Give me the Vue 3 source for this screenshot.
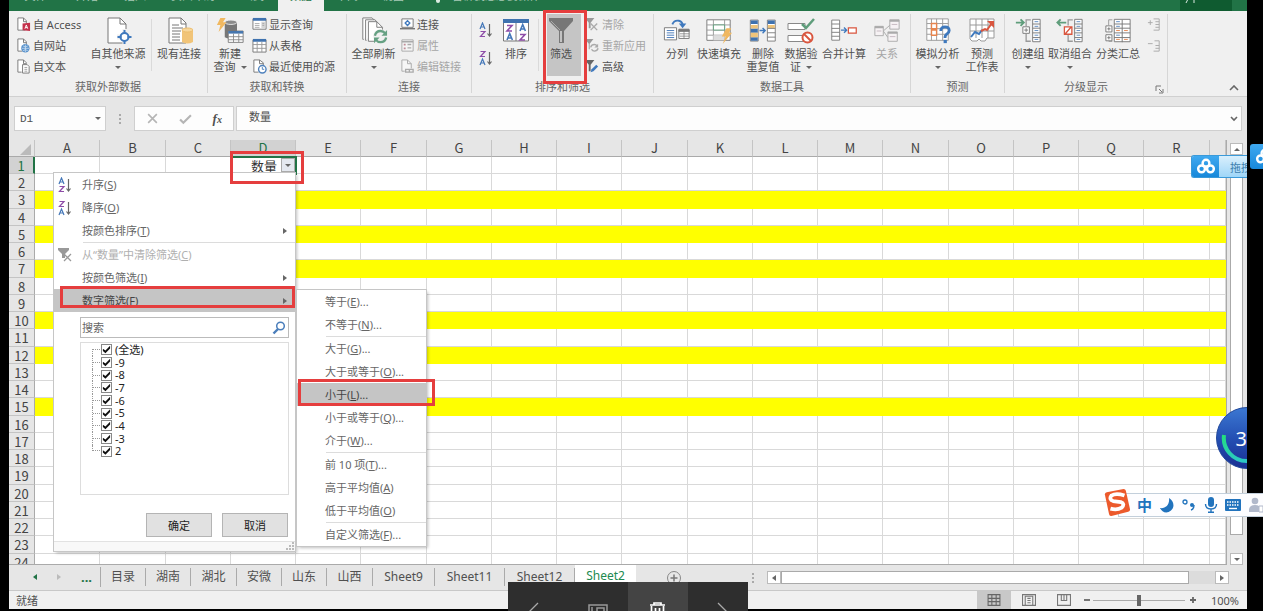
<script setup>
import { ref } from 'vue'

const ribbonTabs = [
  { text: '文件', cls: 'w53' },
  { text: '开始', cls: 'w50' },
  { text: '插入', cls: 'w46' },
  { text: '页面布局', cls: 'w70' },
  { text: '公式', cls: 'w50' },
  { text: '数据', cls: 'w46 active' },
  { text: '审阅', cls: 'w46' },
  { text: '视图', cls: 'w46' }
]

const big = (icon, lines, cls, extra = {}) => ({ kind: 'big', icon, lines, cls, ...extra })
const small = (items, cls = '') => ({ kind: 'small', items, cls })

const groups = [
  {
    name: '获取外部数据', cls: 'g199', parts: [
      small([
        { icon: 'access', text: '自 Access' },
        { icon: 'web', text: '自网站' },
        { icon: 'textfile', text: '自文本' }
      ], 'w76 pad7'),
      big('other', ['自其他来源'], 'w66', { arrow: true }),
      { kind: 'sep' },
      big('existing', ['现有连接'], 'w54')
    ]
  },
  {
    name: '获取和转换', cls: 'g139', parts: [
      big('newquery', ['新建', '查询'], 'w44', { inlineArrow: true }),
      small([
        { icon: 'showquery', text: '显示查询' },
        { icon: 'fromtable', text: '从表格' },
        { icon: 'recent', text: '最近使用的源' }
      ])
    ]
  },
  {
    name: '连接', cls: 'g125', parts: [
      big('refresh', ['全部刷新'], 'w53', { arrow: true }),
      small([
        { icon: 'connect', text: '连接' },
        { icon: 'props', text: '属性', off: true },
        { icon: 'links', text: '编辑链接', off: true }
      ])
    ]
  },
  {
    name: '排序和筛选', cls: 'g182', parts: [
      { kind: 'az' },
      big('sort', ['排序'], 'w44'),
      { kind: 'sep' },
      big('funnel', ['筛选'], 'w34', { on: true }),
      small([
        { icon: 'clear', text: '清除', off: true },
        { icon: 'reapply', text: '重新应用', off: true },
        { icon: 'advanced', text: '高级' }
      ])
    ]
  },
  {
    name: '数据工具', cls: 'g257', parts: [
      big('split', ['分列'], 'w46'),
      big('flash', ['快速填充'], 'w38'),
      big('dedupe', ['删除', '重复值'], 'w50'),
      big('validate', ['数据验', '证'], 'w26', { inlineArrow: true }),
      big('merge', ['合并计算'], 'w60'),
      big('relation', ['关系'], 'w26', { off: true })
    ]
  },
  {
    name: '预测', cls: 'g94', parts: [
      big('whatif', ['模拟分析'], 'w53', { arrow: true }),
      big('forecast', ['预测', '工作表'], 'w36')
    ]
  },
  {
    name: '分级显示', cls: 'g163', launcher: true, parts: [
      big('group', ['创建组'], 'w46', { arrow: true }),
      big('ungroup', ['取消组合'], 'w38', { arrow: true }),
      big('subtotal', ['分类汇总'], 'w58'),
      small([{ icon: 'expand', off: true }, { icon: 'collapse', off: true }], 'tight')
    ]
  }
]

const columns = 'ABCDEFGHIJKLMNOPQR'.split('')
const yellow = [3, 5, 7, 10, 12, 15]

const filterItems = [
  { icon: 'sortaz', text: '升序', key: 'S' },
  { icon: 'sortza', text: '降序', key: 'O' },
  { text: '按颜色排序', key: 'T', more: true },
  { line: true },
  { icon: 'clearbig', text: '从“数量”中清除筛选', key: 'C', off: true },
  { text: '按颜色筛选', key: 'I', more: true },
  { text: '数字筛选', key: 'F', more: true, on: true }
]
const numberItems = [
  { text: '等于', key: 'E', dots: true },
  { text: '不等于', key: 'N', dots: true },
  { line: true },
  { text: '大于', key: 'G', dots: true },
  { text: '大于或等于', key: 'O', dots: true },
  { text: '小于', key: 'L', dots: true, on: true },
  { text: '小于或等于', key: 'Q', dots: true },
  { text: '介于', key: 'W', dots: true },
  { line: true },
  { text: '前 10 项', key: 'T', dots: true },
  { text: '高于平均值', key: 'A' },
  { text: '低于平均值', key: 'O' },
  { line: true },
  { text: '自定义筛选', key: 'F', dots: true }
]
const values = ref(['(全选)', '-9', '-8', '-7', '-6', '-5', '-4', '-3', '2'].map(text => ({ text, checked: true })))

const sheets = [
  ['目录', 'w45'], ['湖南', 'w45'], ['湖北', 'w46'], ['安微', 'w45'], ['山东', 'w45'],
  ['山西', 'w46'], ['Sheet9', 'w62'], ['Sheet11', 'w70'], ['Sheet12', 'w70'], ['Sheet2', 'w61 current']
]
const cellName = ref('D1')
const formula = ref('数量')
const search = ref('')
const zoom = ref(50)
</script>

<template>
  <div class="desktop">
    <svg class="defs" aria-hidden="true">
      <symbol id="access" viewBox="0 0 16 16"><path d="M10 14H2V1h6l3 3v3" fill="#fff" stroke="#777" /><path d="M8 1v4h3" fill="none" stroke="#777" /><path d="M7 7l8-1v9l-8-1z" fill="#c4314b" /><path d="M9.500 12.500l1.500-4 1.500 4M10 11.300h2" stroke="#fff" fill="none" /></symbol>
      <symbol id="web" viewBox="0 0 16 16"><path d="M7 14H2V1h6l3 3v3" fill="#fff" stroke="#777" /><path d="M8 1v4h3" fill="none" stroke="#777" /><circle cx="10" cy="11" r="4.500" fill="#5b93cc" /><path d="M6 11h8M10 7v8M7.500 8.500q2.500 2 5 0M7.500 13.500q2.500-2 5 0" stroke="#dcebf8" stroke-width=".7" fill="none" /></symbol>
      <symbol id="textfile" viewBox="0 0 16 16"><path d="M6 14H2V1h6l3 3v1" fill="#fff" stroke="#777" /><path d="M8 1v4h3" fill="none" stroke="#777" /><path d="M7 6h5l2 2v7H7z" fill="#fff" stroke="#777" /><path d="M9 9h3M9 11h3M9 13h3" stroke="#888" stroke-width=".8" /></symbol>
      <symbol id="other" viewBox="0 0 28 28"><path d="M4 1h12l6 6v19H4z" fill="#fff" stroke="#777" /><path d="M16 1v6h6" fill="none" stroke="#777" /><path d="M21 12v16M13 20h16" stroke="#f0f0f0" stroke-width="5" /><circle cx="20.500" cy="20" r="4" fill="#fff" stroke="#3f79bd" stroke-width="2" /><path d="M20.500 13v4M20.500 23v4M13.500 20h4M23.500 20h4" stroke="#3f79bd" stroke-width="2" /></symbol>
      <symbol id="existing" viewBox="0 0 28 28"><path d="M4 1h12l5 5v20H4z" fill="#fff" stroke="#777" /><path d="M16 1v6h5M7 8h7M7 11h11M7 14h9M7 17h8M7 20h8M7 23h8" fill="none" stroke="#777" /><path d="M17 13v12q5.500 3 11 0V13z" fill="#f1c478" /><ellipse cx="22.500" cy="13" rx="5.500" ry="2" fill="#f7d79c" stroke="#eebd6b" /></symbol>
      <symbol id="newquery" viewBox="0 0 32 30"><path d="M10 5v17q7 4 14 0V5z" fill="#777" /><ellipse cx="17" cy="5" rx="7" ry="2.500" fill="#8b8b8b" stroke="#f0f0f0" /><path d="M5 0h6L8 5h4L3 16l2-8H1z" fill="#f0b860" /><path d="M14 15h17v13H14z" fill="#fff" stroke="#777" /><path d="M14 15h17v3H14z" fill="#4777af" /><path d="M14 21.500h17M14 25h17M20 18v10M26 18v10" stroke="#888" /></symbol>
      <symbol id="showquery" viewBox="0 0 16 16"><path d="M1 2h14v11H1z" fill="#fff" stroke="#777" /><path d="M1 1h14v3H1z" fill="#3f72af" /><path d="M10 5h4v7h-4z" fill="#d6d6d6" /><path d="M3 7h5M3 9h5M3 11h5M11 7h2M11 9h2" stroke="#aaa" /></symbol>
      <symbol id="fromtable" viewBox="0 0 16 16"><path d="M1 2h14v13H1z" fill="#fff" stroke="#777" /><path d="M1 1h14v3H1z" fill="#3f72af" /><path d="M1 7h14M1 11h14M5.500 4v11M10.500 4v11" stroke="#999" /></symbol>
      <symbol id="recent" viewBox="0 0 16 16"><path d="M7 14H2V1h6l4 3v3" fill="#fff" stroke="#777" /><path d="M8 1v4h4" fill="none" stroke="#777" /><circle cx="11" cy="11" r="4" fill="#fff" stroke="#4f82bd" stroke-width="1.500" /><path d="M11 8.500V11h2" fill="none" stroke="#4f82bd" /></symbol>
      <symbol id="refresh" viewBox="0 0 30 30"><path d="M4 24H3V1h10l2 2M7 25H6V3h10l2 2" fill="#fff" stroke="#777" /><path d="M9 5h9l6 6v15H9z" fill="#fff" stroke="#777" /><path d="M18 5v6h6" fill="none" stroke="#777" /><circle cx="22" cy="21" r="8" fill="#f0f0f0" /><path d="M16 20q1-5 6-5 3 0 5 2.500M28 22q-1 5-6 5-3 0-5-2.500" fill="none" stroke="#66a183" stroke-width="2.500" /><path d="M29 14v6h-6zM15 28v-6h6z" fill="#66a183" /></symbol>
      <symbol id="connect" viewBox="0 0 16 16"><path d="M2 2h12v9H2z" fill="#fff" stroke="#777" /><path d="M0 12.500h16" stroke="#777" stroke-width="1.500" /><path d="M8 3l3.500 3.500L8 10 4.500 6.500z" fill="#3f79bd" /><circle cx="8" cy="6.500" r="1.200" fill="#fff" /></symbol>
      <symbol id="props" viewBox="0 0 16 16"><path d="M2 2h12v12H2z" fill="#f5f5f5" stroke="#aaa" /><path d="M2 4h12M8 7h4M8 10.500h4" stroke="#aaa" stroke-width="1.500" /><path d="M4 6h2v2H4zM4 10h2v2H4z" fill="#c08d97" /></symbol>
      <symbol id="links" viewBox="0 0 16 16"><path d="M5 13H2V1h6l4 4v5" fill="#f6f6f6" stroke="#aaa" /><path d="M8 1v4h4" fill="none" stroke="#aaa" /><path d="M6 11h4v3H6zM10 11h4v3h-4z" fill="none" stroke="#aaa" stroke-width="1.400" /></symbol>
      <symbol id="sortaz" viewBox="0 0 14 16"><path d="M1 7l2.500-6L6 7M2 5h3" fill="none" stroke="#4477b8" stroke-width="1.200" /><path d="M1.500 9.500H6L1.500 14.500H6" fill="none" stroke="#8e4ea8" stroke-width="1.200" /><path d="M10.500 2v12M8.500 11.500l2 2.500 2-2.500" fill="none" stroke="#666" stroke-width="1.200" /></symbol>
      <symbol id="sortza" viewBox="0 0 14 16"><path d="M1.500 1.500H6L1.500 6.500H6" fill="none" stroke="#8e4ea8" stroke-width="1.200" /><path d="M1 15l2.500-6L6 15M2 13h3" fill="none" stroke="#4477b8" stroke-width="1.200" /><path d="M10.500 2v12M8.500 11.500l2 2.500 2-2.500" fill="none" stroke="#666" stroke-width="1.200" /></symbol>
      <symbol id="sort" viewBox="0 0 28 28"><path d="M1.500 3h25v21h-25zM14 3v21" fill="#fff" stroke="#777" /><path d="M1 2h26v4H1z" fill="#3f72af" /><path d="M5 8.500h5L5 14h5M18 17.500h5L18 23h5" fill="none" stroke="#8e4ea8" stroke-width="1.600" /><path d="M5 23l2.700-6.500L10.400 23M6 21h3.500M18 14l2.700-6.500L23.400 14M19 12h3.500" fill="none" stroke="#4477b8" stroke-width="1.600" /></symbol>
      <symbol id="funnel" viewBox="0 0 28 28"><path d="M2 1h24v3L17 14v12h-5V14L2 4z" fill="#777" /><path d="M14 14v11" stroke="#ddd" stroke-width="1.500" /><path d="M4 4l9 9" stroke="#aaa" /></symbol>
      <symbol id="clear" viewBox="0 0 16 16"><path d="M0 1h10L6 6v6H4V6z" fill="#999" /><path d="M6 7l7 7M13 7l-7 7" stroke="#aaa" stroke-width="1.500" /></symbol>
      <symbol id="reapply" viewBox="0 0 16 16"><path d="M0 1h9L5 6v6H4V6z" fill="#999" /><path d="M6 10q1-3 4-3 2 0 3 2M14 11q-1 3-4 3-2 0-3-2" fill="none" stroke="#aaa" stroke-width="1.500" /><path d="M14 6v4h-4z" fill="#aaa" /></symbol>
      <symbol id="advanced" viewBox="0 0 16 16"><path d="M0 1h10L6 6v7H4V6z" fill="#666" /><path d="M6 14l1-3 5-5 2 2-5 5z" fill="#3f79bd" /></symbol>
      <symbol id="clearbig" viewBox="0 0 16 16"><path d="M1 1h11v2L8 7v4H5V7L1 3z" fill="#999" /><path d="M7 7l7 7M14 7l-7 7" stroke="#999" stroke-width="1.300" /></symbol>
      <symbol id="split" viewBox="0 0 30 28"><path d="M1.500 10.500h13v13h-13z" fill="#fff" stroke="#777" /><path d="M4 13.500h8M4 16h8M4 18.500h8M4 21h8" stroke="#4477b8" /><path d="M17 13h11v9H17z" fill="#fff" stroke="#777" /><path d="M17 12h11v2.500H17zM22.500 14v8M18 17h10M18 19.500h10" fill="#777" stroke="#777" stroke-width=".8" /><path d="M10 7q2-5 7-4 4 1 4 5" fill="none" stroke="#3f79bd" stroke-width="2" /><path d="M17 6h8l-4 5z" fill="#3f79bd" /></symbol>
      <symbol id="flash" viewBox="0 0 30 28"><path d="M2 2h25v22H2z" fill="#fff" stroke="#777" /><path d="M2 7.500h25M2 13h25M2 18.500h25M9 2v22M21 2v22" stroke="#999" /><path d="M9 7.500h12V13H9z" fill="#fff" stroke="#5f9d7b" /><path d="M9 18.500h12V24H9z" fill="#ddd" /><path d="M23 11h5l-2 5h3L19 28l3-8h-4z" fill="#f0b860" /></symbol>
      <symbol id="dedupe" viewBox="0 0 32 28"><path d="M1.500 1.500h9v24h-9zM21 1.500h9v24h-9z" fill="#fff" stroke="#777" /><path d="M2 2h8v4H2zM2 11h8v5H2zM2 21h8v4H2zM21.500 2h8v4h-8z" fill="#3f72af" /><path d="M2 7h8v4H2zM2 16h8v5H2zM21.500 7h8v4h-8z" fill="#efc47a" /><path d="M21 11h9M21 16h9M21 21h9" stroke="#777" /><path d="M12 13.500h6M15.500 10.500l3 3-3 3" fill="none" stroke="#3f79bd" stroke-width="1.600" /></symbol>
      <symbol id="validate" viewBox="0 0 28 28"><path d="M1 6.500h17v6H1zM1 18.500h16v6H1z" fill="#fff" stroke="#888" /><path d="M15 7l4 4 8-9" fill="none" stroke="#5f9d7b" stroke-width="2.500" /><circle cx="20.500" cy="20.500" r="5" fill="#fff" stroke="#d9563f" stroke-width="2" /><path d="M17 17l7 7" stroke="#d9563f" stroke-width="2" /></symbol>
      <symbol id="merge" viewBox="0 0 32 28"><path d="M2 1.500h9v23H2zM2 6h9M2 11h9M2 15.500h9M2 20h9" fill="#fff" stroke="#777" /><path d="M12.500 13h6M16 10l3 3-3 3" fill="none" stroke="#3f79bd" stroke-width="1.600" /><path d="M21 10.500h9v6h-9z" fill="#fff" stroke="#d9563f" stroke-width="1.400" /></symbol>
      <symbol id="relation" viewBox="0 0 30 28"><path d="M11 14l8-7M11 14l5 7" stroke="#aaa" fill="none" /><path d="M2 9h9v10H2zM18 2h10v10H18zM16 15h10v10H16z" fill="#f6f2f4" stroke="#aaa" /><path d="M2 10h9M18 3h10M16 16h10" stroke="#aaa" stroke-width="2" /><path d="M4 14h5M20 7h6M18 20h6" stroke="#c5b8c0" /></symbol>
      <symbol id="whatif" viewBox="0 0 30 30"><path d="M3 2h23v23H3zM3 7h23M3 12.500h23M3 18.500h23M8 2v23M13.500 2v23M20 2v23" fill="#fff" stroke="#999" /><path d="M8 7h5.500v5.500H8zM8 14h5.500v5.500H8z" fill="#fff" stroke="#e6844e" stroke-width="1.500" /><path d="M18 15q0-4.500 4.500-4.500T27 14.500q0 2-2.300 3.500T22.500 22.500" fill="none" stroke="#3f79bd" stroke-width="3" /><path d="M21 24.500h3.500V28H21z" fill="#3f79bd" /></symbol>
      <symbol id="forecast" viewBox="0 0 28 28"><path d="M2 2h24v19h-7l-2 3h-4l-2-2-2 2H4l-2-2zM2 8h24M2 14h24M8 2v19M14 2v19M20 2v19" fill="#fff" stroke="#999" /><path d="M3 20l4-5 4 2 3-4" fill="none" stroke="#3f79bd" stroke-width="2" /><path d="M13 14l4-2 2 1 5-7" fill="none" stroke="#d9563f" stroke-width="2" /><path d="M19 4h7v7z" fill="#d9563f" /></symbol>
      <symbol id="group" viewBox="0 0 30 28"><path d="M20 1.500h8v24h-8zM20 6.500h8M20 11h8M20 16h8M20 21h8" fill="#fff" stroke="#777" /><path d="M22 4h4M22 9h4M22 13.500h4M22 18.500h4M22 23h4" stroke="#5a89c0" /><path d="M18 2h-5v7M13 17v8h5" fill="none" stroke="#999" stroke-width="1.400" /><path d="M9.500 9.500h7v7h-7zM11 13h4M13 11v4" fill="#fff" stroke="#777" /><path d="M2 5h8M7 1.500L10.500 5 7 8.500" fill="none" stroke="#5f9d7b" stroke-width="2" /></symbol>
      <symbol id="ungroup" viewBox="0 0 30 28"><path d="M20 1.500h8v24h-8zM20 6.500h8M20 11h8M20 16h8M20 21h8" fill="#fff" stroke="#777" /><path d="M22 4h4M22 9h4M22 13.500h4M22 18.500h4M22 23h4" stroke="#5a89c0" /><path d="M18 2h-5v6M13 18v7h5" fill="none" stroke="#999" stroke-width="1.400" /><path d="M9 9.500h8v8H9zM10 17l6-7" fill="#fff" stroke="#d9563f" stroke-width="1.400" /><path d="M2 5h9M5 1.500L1.500 5 5 8.500" fill="none" stroke="#5f9d7b" stroke-width="2" /></symbol>
      <symbol id="subtotal" viewBox="0 0 30 28"><path d="M11 1.500h17v24H11zM11 6.500h17M11 11h17M11 16h17M11 21h17M19.500 2v24" fill="#fff" stroke="#777" /><path d="M13 4h4M13 9h4M13 18.500h4" stroke="#5a89c0" /><path d="M13 13.500h4M21.500 13.500h4M21.500 23h4M13 23h4" stroke="#e6844e" /><path d="M9 2H5v6M5 25h4" fill="none" stroke="#999" /><path d="M2 8.500h6.500V15H2zM2 18h6.500v6.500H2zM3.500 11.700h3.500M5.200 10v3.500M3.500 21.200h3.500M5.200 19.500V23" fill="#fff" stroke="#777" /></symbol>
      <symbol id="expand" viewBox="0 0 16 16"><path d="M1 6h5M3.500 3.500v5M7 2h6v12H7M9 5h4M9 8h4M9 11h4" fill="none" stroke="#aaa" /></symbol>
      <symbol id="collapse" viewBox="0 0 16 16"><path d="M1 6h5M8 3h5v11H7M9 8h4M9 11h4" fill="none" stroke="#aaa" /></symbol>
      <symbol id="cloud" viewBox="0 0 20 18"><g fill="none" stroke="#fff" stroke-width="2.600"><circle cx="10" cy="5.500" r="3.600" /><circle cx="5.300" cy="11.500" r="3.600" /><circle cx="14.700" cy="11.500" r="3.600" /></g></symbol>
    </svg>

    <main class="window">
      <nav class="ribbon-tabs">
        <a v-for="t in ribbonTabs" :key="t.text" href="#" :class="t.cls">{{ t.text }}</a>
        <span class="bulb"></span>
        <a href="#" class="tell">告诉我您想要做什么...</a>
        <span class="share"><svg viewBox="0 0 16 6"><path d="M1 6l3-6M5 2h8M9 0v6" fill="none" stroke="#dcebe2" /></svg></span>
      </nav>

      <section class="ribbon">
        <div v-for="g in groups" :key="g.name" class="group" :class="g.cls">
          <div class="group-body">
            <template v-for="(p, i) in g.parts" :key="i">
              <button v-if="p.kind === 'big'" class="big" :class="[p.cls, { on: p.on, off: p.off }]">
                <svg class="icon-big"><use :href="'#' + p.icon" /></svg>
                <span v-for="(l, n) in p.lines" :key="l" class="line">{{ l }}<i v-if="p.inlineArrow && n === 1" class="tri"></i></span>
                <span v-if="p.arrow" class="line"><i class="tri alone"></i></span>
              </button>
              <span v-else-if="p.kind === 'sep'" class="vsep"></span>
              <div v-else-if="p.kind === 'az'" class="az">
                <button aria-label="升序"><svg><use href="#sortaz" /></svg></button>
                <button aria-label="降序"><svg><use href="#sortza" /></svg></button>
              </div>
              <div v-else class="smalls" :class="p.cls">
                <button v-for="s in p.items" :key="s.icon" class="small" :class="{ off: s.off }">
                  <svg class="icon-small"><use :href="'#' + s.icon" /></svg><span>{{ s.text }}</span>
                </button>
              </div>
            </template>
          </div>
          <div class="group-name">{{ g.name }}
            <svg v-if="g.launcher" class="launcher" viewBox="0 0 9 9"><path d="M1 6V1h5M4 4l3 3M8 4v4H4" fill="none" stroke="#777" /></svg>
          </div>
        </div>
        <button class="fold" aria-label="折叠功能区"><svg viewBox="0 0 10 6"><path d="M1 5l4-4 4 4" fill="none" stroke="#666" stroke-width="1.600" /></svg></button>
      </section>

      <section class="formula-row">
        <label class="name-box"><input v-model="cellName" aria-label="名称框"><i class="tri"></i></label>
        <span class="grip"></span>
        <div class="fx">
          <button aria-label="取消输入"><svg viewBox="0 0 12 12"><path d="M2 2l8 8M10 2l-8 8" stroke="#b5b5b5" stroke-width="1.500" /></svg></button>
          <button aria-label="输入"><svg viewBox="0 0 12 12"><path d="M1 7l3 3 7-7" fill="none" stroke="#b5b5b5" stroke-width="2" /></svg></button>
          <button class="fn">f<small>x</small></button>
        </div>
        <label class="formula"><input v-model="formula" aria-label="编辑栏"><svg viewBox="0 0 8 6"><path d="M1 1l3 3 3-3" fill="none" stroke="#666" stroke-width="1.600" /></svg></label>
      </section>

      <section class="sheet">
        <div class="grid">
          <table>
            <colgroup><col class="c-head"><col v-for="(c, i) in columns" :key="c" :class="i % 4 === 1 ? 'c66' : 'c65'"><col></colgroup>
            <thead>
              <tr><th class="corner"><i></i></th><th v-for="c in columns" :key="c" :class="{ sel: c === 'D' }">{{ c }}</th><th></th></tr>
            </thead>
            <tbody>
              <tr v-for="r in 24" :key="r" :class="{ yellow: yellow.includes(r), tall: r % 4 === 3 }">
                <th :class="{ sel: r === 1 }">{{ r }}</th>
                <td v-for="c in columns" :key="c" :class="{ active: r === 1 && c === 'D' }">
                  <div v-if="r === 1 && c === 'D'" class="field">数量<button aria-label="筛选"><i class="tri"></i></button></div>
                </td>
                <td></td>
              </tr>
            </tbody>
          </table>
        </div>
        <div class="vscroll">
          <button aria-label="向上"><i class="tri up"></i></button>
          <div class="vthumb"></div>
          <button aria-label="向下"><i class="tri"></i></button>
        </div>
      </section>

      <section class="tabs-row">
        <div class="tab-nav"><i class="tri left green"></i><i class="tri right pale"></i><b>...</b></div>
        <button v-for="s in sheets" :key="s[0]" class="tab" :class="s[1]">{{ s[0] }}</button>
        <button class="add" aria-label="新工作表"><svg viewBox="0 0 16 16"><circle cx="8" cy="8" r="6.500" fill="none" stroke="#888" /><path d="M8 4.500v7M4.500 8h7" stroke="#777" stroke-width="1.500" /></svg></button>
        <span class="grip end"></span>
        <div class="hscroll">
          <button aria-label="向左"><i class="tri left"></i></button>
          <div class="hthumb"></div><div class="htrack"></div>
          <button aria-label="向右"><i class="tri right"></i></button>
        </div>
      </section>

      <footer class="status">
        <span class="ready">就绪</span>
        <button class="view on" aria-label="普通"><svg viewBox="0 0 13 13"><path d="M1 1.500h11v10H1zM1 5h11M1 8h11M4.500 1.500v10M8.500 1.500v10" fill="none" stroke="#666" /></svg></button>
        <button class="view" aria-label="页面布局"><svg viewBox="0 0 13 13"><path d="M.5 1.500h12v10H.5zM3 3h7v8.500H3zM5 5h3M5 7h3M5 9h3" fill="none" stroke="#777" /></svg></button>
        <button class="view" aria-label="分页预览"><svg viewBox="0 0 13 13"><path d="M.5 1.500h12v10H.5zM4 1.500V7h5V1.500M6.500 1.500V7" fill="none" stroke="#777" /></svg></button>
        <button class="step" aria-label="缩小"><svg viewBox="0 0 8 8"><path d="M1 4h6" stroke="#666" stroke-width="1.800" /></svg></button>
        <input v-model="zoom" type="range" aria-label="缩放">
        <button class="step" aria-label="放大"><svg viewBox="0 0 8 8"><path d="M1 4h6M4 1v6" stroke="#666" stroke-width="1.800" /></svg></button>
        <span class="percent">100%</span>
      </footer>
    </main>

    <aside class="menu filter-menu">
      <template v-for="(m, i) in filterItems" :key="i">
        <hr v-if="m.line">
        <button v-else class="item" :class="{ on: m.on, off: m.off }">
          <span class="item-icon"><svg v-if="m.icon"><use :href="'#' + m.icon" /></svg></span>
          <span class="item-text">{{ m.text }}(<u>{{ m.key }}</u>)</span>
          <i v-if="m.more" class="tri right"></i>
        </button>
      </template>
      <div class="menu-form">
        <label class="search"><input v-model="search" placeholder="搜索" aria-label="搜索"><svg viewBox="0 0 14 14"><circle cx="8.500" cy="5" r="3.800" fill="none" stroke="#4a7ebb" stroke-width="1.500" /><path d="M6 8l-4.500 4.500" stroke="#4a7ebb" stroke-width="2.400" /></svg></label>
        <div class="tree">
          <label v-for="v in values" :key="v.text"><span class="twig"></span><input v-model="v.checked" type="checkbox"><span>{{ v.text }}</span></label>
        </div>
        <div class="actions"><button>确定</button><button>取消</button></div>
      </div>
      <div class="resize"><svg viewBox="0 0 8 8"><path d="M6 0h2v2H6zM3 3h2v2H3zM6 3h2v2H6zM0 6h2v2H0zM3 6h2v2H3zM6 6h2v2H6z" fill="#bbb" /></svg></div>
    </aside>

    <aside class="menu number-menu">
      <template v-for="(m, i) in numberItems" :key="i">
        <hr v-if="m.line">
        <button v-else class="item" :class="{ on: m.on }"><span class="item-text">{{ m.text }}(<u>{{ m.key }}</u>)<template v-if="m.dots">...</template></span></button>
      </template>
    </aside>

    <span class="mark mark-filter"></span>
    <span class="mark mark-cell"></span>
    <span class="mark mark-number"></span>
    <span class="mark mark-less"></span>

    <div class="drag"><span class="drag-icon"><svg><use href="#cloud" /></svg></span><span class="drag-text">拖拽上传</span></div>
    <div class="drag-side"><svg><use href="#cloud" /></svg></div>

    <div class="ball"><svg viewBox="0 0 31 62"><defs><linearGradient id="ballfill" x2="0" y2="1"><stop stop-color="#3c78d2" /><stop offset=".5" stop-color="#2450b4" /><stop offset="1" stop-color="#1a2f92" /></linearGradient><linearGradient id="arc" x2="0" y2="1"><stop stop-color="#22e07a" /><stop offset="1" stop-color="#2cc8c4" /></linearGradient></defs><circle cx="31" cy="31" r="30.500" fill="url(#ballfill)" stroke="#234a9c" /><path d="M8 28A23 23 0 0 0 31 54" fill="none" stroke="url(#arc)" stroke-width="4" /></svg><b>3</b></div>

    <div class="ime">
      <svg class="ime-logo" viewBox="0 0 30 30"><path d="M2 6q0-2 2-2.500L22 0q2 0 2.500 2L29 22q0 2-2 2.500L9 29q-2 0-2.500-2z" fill="#ec5a2c" /><path d="M23 7q-9-3-14 0-3 4 2 6l8 1q5 2 1 6-5 3-12 1" fill="none" stroke="#fff" stroke-width="4" /></svg>
      <b>中</b>
      <svg viewBox="0 0 16 16"><path d="M10 1C15 4 16 10 12 13.500S3 15.500 1 11C6 12 11 8 10 1z" fill="#2173bd" /></svg>
      <svg viewBox="0 0 16 16"><circle cx="4" cy="5" r="2" fill="none" stroke="#2173bd" stroke-width="1.300" /><circle cx="11" cy="8" r="2" fill="#2173bd" /><path d="M13 8q0 4-3 5" fill="none" stroke="#2173bd" stroke-width="1.500" /></svg>
      <svg viewBox="0 0 16 16"><rect x="5" y="0" width="6" height="10" rx="3" fill="#2173bd" /><path d="M2.500 7q0 5 5.500 5t5.500-5M8 12v3M5 15.300h6" fill="none" stroke="#2173bd" stroke-width="1.400" /></svg>
      <svg viewBox="0 0 16 16"><rect x="0" y="2" width="16" height="12" rx="1" fill="#2173bd" /><path d="M2 5h12M2 8h12" stroke="#fff" stroke-width="1.500" stroke-dasharray="1.500 1" /><path d="M4 11.500h8" stroke="#fff" stroke-width="1.400" /></svg>
      <svg viewBox="0 0 16 16"><circle cx="8" cy="4" r="3.300" fill="#b1b9cb" /><path d="M2 15v-3q1-4 6-4t6 4v3z" fill="#b1b9cb" /><path d="M12 9h4v6h-4z" fill="#fff" stroke="#b1b9cb" /></svg>
    </div>

    <div class="viewer">
      <button aria-label="上一张"><svg viewBox="0 0 60 29"><path d="M30 21l-9 9" fill="none" stroke="#aaa" stroke-width="1.300" /></svg></button>
      <button aria-label="适合窗口"><svg viewBox="0 0 60 29"><path d="M21 30v-7h18v7M24 30v-5M29 30v-4h7v4" fill="none" stroke="#999" stroke-width="1.500" /></svg></button>
      <button class="hot" aria-label="删除"><svg viewBox="0 0 60 29"><path d="M22 23h15M26 23v-2h7v2M23.500 24v6M35.500 24v6M27.500 26v4M31.500 26v4" fill="none" stroke="#fff" stroke-width="1.700" /></svg></button>
      <button aria-label="下一张"><svg viewBox="0 0 60 29"><path d="M30 21l9 9" fill="none" stroke="#aaa" stroke-width="1.300" /></svg></button>
    </div>
  </div>
</template>

<style>
body { background: #000; overflow: hidden; }
</style>

<style scoped>
.desktop, .desktop * { box-sizing: border-box; }
.desktop {
  position: relative; height: 100vh; overflow: hidden; background: #000; padding: 0 16px 2px 9px;
  font: 11px/13px "Noto Sans", "Noto Sans CJK SC", sans-serif; color: #505050;
}
.defs { position: absolute; width: 0; height: 0; }
button { font: inherit; color: inherit; background: none; border: 0; padding: 0; }
input { font: inherit; color: inherit; margin: 0; border: 0; padding: 0; background: none; min-width: 0; outline: 0; }
a { color: inherit; text-decoration: none; }
svg { display: block; flex: none; }

.w26 { width: 26px; } .w34 { width: 34px; } .w36 { width: 36px; } .w38 { width: 38px; }
.w44 { width: 44px; } .w45 { width: 45px; } .w46 { width: 46px; } .w50 { width: 50px; }
.w53 { width: 53px; } .w54 { width: 54px; } .w58 { width: 58px; } .w60 { width: 60px; }
.w61 { width: 61px; } .w62 { width: 62px; } .w66 { width: 66px; } .w70 { width: 70px; } .w76 { width: 76px; }

.tri { display: inline-block; flex: none; width: 0; height: 0; border: 3px solid transparent; border-top-color: #666; border-bottom: 0; }
.tri.up { border: 3px solid transparent; border-bottom-color: #666; border-top: 0; }
.tri.right { border: 3px solid transparent; border-left: 4px solid #666; border-right: 0; }
.tri.left { border: 3px solid transparent; border-right: 4px solid #666; border-left: 0; }
.tri.green { border-right-color: #217346; }
.tri.pale { border-left-color: #bbb; }

.window { height: 100%; display: flex; flex-direction: column; background: #e6e6e6; overflow: hidden; }

.ribbon-tabs { flex: none; height: 11px; background: #217346; color: #a9cbb8; display: flex; align-items: flex-end; overflow: hidden; }
.ribbon-tabs a { flex: none; text-align: center; line-height: 12px; padding-bottom: 9px; white-space: nowrap; }
.ribbon-tabs a.active { background: #f0f0f0; color: #217346; }
.ribbon-tabs .bulb { width: 4px; height: 3px; background: #dcebe2; margin: 0 12px 8px 20px; border-radius: 0 0 2px 2px; }
.share { margin-left: auto; margin-right: 15px; width: 52px; height: 11px; background: #0f5b30; }
.share svg { width: 16px; height: 6px; margin-left: 5px; margin-top: -3px; }

.ribbon { flex: none; height: 86px; background: #f0f0f0; border-bottom: 1px solid #d0d0d0; display: flex; padding-top: 3px; }
.group { flex: none; height: 79px; border-right: 1px solid #d6d6d6; }
.g199 { width: 199px; } .g139 { width: 139px; } .g125 { width: 125px; } .g182 { width: 182px; }
.g257 { width: 257px; } .g94 { width: 94px; } .g163 { width: 163px; }
.group-body { display: flex; height: 63px; }
.group-name { text-align: center; line-height: 19px; color: #666; position: relative; }
.launcher { position: absolute; right: 3px; bottom: 2px; width: 9px; height: 9px; }
.big { flex: none; height: 62px; display: flex; flex-direction: column; align-items: center; padding-top: 3px; white-space: nowrap; }
.big.on { background: #c5c5c5; margin-left: 8px; margin-right: 4px; padding-right: 6px; }
.off { color: #a6a6a6; }
.icon-big { width: 28px; height: 28px; margin-bottom: 2px; }
.line { height: 13px; }
.line .tri { margin: 0 0 2px 5px; }
.line .tri.alone { margin-left: 0; }
.vsep { width: 1px; height: 52px; margin-top: 5px; background: #dadada; }
.smalls { flex: none; display: flex; flex-direction: column; }
.pad7 { padding-left: 7px; }
.small { display: flex; align-items: center; gap: 2px; height: 21px; white-space: nowrap; }
.icon-small { width: 15px; height: 15px; }
.az { width: 22px; padding-left: 6px; display: flex; flex-direction: column; gap: 12px; padding-top: 8px; }
.az svg { width: 16px; height: 16px; }
.fold { margin: auto 8px 5px auto; }
.fold svg { width: 10px; height: 6px; }

.formula-row { flex: none; height: 43px; padding: 9px 5px; display: flex; }
.name-box, .fx, .formula { display: flex; align-items: center; background: #fdfdfd; border: 1px solid #cfcfcf; }
.name-box { width: 92px; padding: 0 4px 0 5px; }
.name-box input { flex: 1; font: 11px "Liberation Mono", monospace; }
.grip { width: 2px; height: 12px; margin: auto 13px; background: radial-gradient(circle, #aaa 1px, transparent 1px) 0 0 / 2px 4px; }
.fx { width: 100px; justify-content: space-around; padding: 0 1px; margin-right: 2px; }
.fx svg { width: 13px; height: 13px; }
.fn { font: italic bold 13px/13px "Liberation Serif", serif; }
.fn small { font-size: 10px; }
.formula { flex: 1; padding: 0 3px 0 12px; }
.formula input { flex: 1; height: 16px; margin-bottom: 5px; }
.formula svg { width: 8px; height: 6px; }

.sheet { flex: 1; min-height: 0; display: flex; }
.grid { flex: 1; min-width: 0; overflow: hidden; background: #fff; border-right: 1px solid #aaa; border-bottom: 1px solid #aaa; }
table { width: 100%; table-layout: fixed; border-collapse: separate; border-spacing: 0; }
.c-head { width: 26px; } .c65 { width: 65px; } .c66 { width: 66px; }
th, td { height: 17px; padding: 0; overflow: hidden; border-right: 1px solid #d9d9d9; border-bottom: 1px solid #d9d9d9; font: 13px/15px "Noto Sans CJK SC", sans-serif; }
.tall th, .tall td { height: 18px; }
th { background: #e6e6e6; color: #444; text-align: center; border-color: #c4c4c4; }
thead th { border-bottom-color: #aaa; line-height: 16px; }
tbody th { border-right-color: #aaa; }
.corner i { display: block; margin: 4px 3px 1px auto; width: 0; height: 0; border-left: 11px solid transparent; border-bottom: 11px solid #bbb; }
th.sel { background: #d2d2d2; color: #217346; }
thead th.sel { border-bottom-color: #217346; }
tbody th.sel { border-right: 2px solid #217346; }
.yellow td { background: #ff0; border-color: #ff0; }
td.active { outline: 2px solid #217346; outline-offset: -1px; overflow: visible; }
.field { display: flex; justify-content: flex-end; align-items: center; gap: 4px; height: 15px; color: #333; }
.field button { width: 14px; height: 14px; border: 1px solid #aaa; background: #e4e8ef; display: flex; align-items: center; justify-content: center; }
.vscroll { flex: none; width: 20px; padding: 3px 4px 0 3px; display: flex; flex-direction: column; background: #e6e6e6; }
.vscroll button, .hscroll button { flex: none; width: 13px; height: 12px; background: #fff; border: 1px solid #bbb; display: flex; align-items: center; justify-content: center; }
.vthumb { flex: 1; width: 13px; margin: 1px 0 18px; background: #fff; border: 1px solid #aaa; }

.tabs-row { flex: none; height: 26px; display: flex; border-bottom: 1px solid #c8c8c8; }
.tab-nav { width: 92px; display: flex; align-items: center; justify-content: flex-end; gap: 20px; padding-right: 8px; border-right: 1px solid #aaa; height: 20px; margin-top: 2px; color: #217346; font-size: 13px; }
.tab-nav b { line-height: 12px; }
.tab { flex: none; height: 18px; margin-top: 3px; border-right: 1px solid #aaa; font-size: 12px; line-height: 16px; white-space: nowrap; }
.tab.current { height: 22px; margin-top: 0; padding-top: 1px; border: 0; border-bottom: 2px solid #217346; background: #fff; color: #218a50; }
.add { width: 16px; margin-left: 30px; }
.add svg { width: 16px; height: 16px; }
.grip.end { margin: auto 13px auto auto; }
.hscroll { width: 462px; height: 13px; margin: 6px 18px 0 0; display: flex; background: #dcdcdc; }
.hscroll button { height: 13px; width: 14px; }
.hthumb { flex: 1; background: #fff; border: 1px solid #aaa; }
.htrack { width: 26px; }

.status { flex: none; height: 18px; background: #f0f0f0; display: flex; align-items: center; }
.ready { margin: 0 auto 0 7px; }
.view { width: 34px; height: 18px; display: flex; align-items: center; justify-content: center; }
.view.on { background: #c8c8c8; }
.view svg { width: 14px; height: 14px; }
.view + .view { margin-left: 1px; }
.step { width: 8px; }
.step svg { width: 8px; height: 8px; }
.view + .step { margin-left: 2px; }
.status input { appearance: none; width: 92px; height: 12px; margin: 0 4px 0 2px; background: linear-gradient(#aaa, #aaa) center / 100% 1px no-repeat; }
.status input::-webkit-slider-thumb { appearance: none; width: 4px; height: 11px; background: #666; }
.percent { margin: 0 8px 0 14px; }

.menu { position: absolute; background: #fff; box-shadow: 0 0 0 1px #c6c6c6, 2px 2px 3px rgba(0, 0, 0, .25); color: #666; }
.menu hr { margin: 0 0 0 29px; border: 0; height: 1px; background: #dcdcdc; }
.item { width: 100%; height: 23px; display: flex; align-items: center; white-space: nowrap; }
.item.on { background: #c5c5c5; color: #444; }
.item.off { color: #b0b0b0; }
.item-icon { width: 28px; padding-left: 3px; }
.item-icon svg { width: 16px; height: 16px; }
.item .tri { margin-left: auto; margin-right: 8px; }
.filter-menu { left: 54px; top: 173px; width: 241px; }
.number-menu { left: 297px; top: 290px; width: 129px; }
.number-menu .item { padding-left: 28px; }
.menu-form { padding: 5px 6px 4px 26px; }
.search { display: flex; align-items: center; height: 21px; border: 1px solid #bbb; padding: 0 2px 0 1px; }
.search input { flex: 1; height: 17px; }
.search input::placeholder { color: #666; opacity: 1; }
.search svg { width: 14px; height: 14px; }
.tree { height: 153px; margin-top: 4px; border: 1px solid #ddd; padding-left: 11px; color: #222; line-height: 12px; }
.tree label { display: flex; align-items: center; height: 13px; }
.tree label:nth-child(3n) { height: 12px; }
.twig { width: 9px; align-self: stretch; border-left: 1px dotted #999; background: linear-gradient(90deg, #999 1px, transparent 1px) 0 50% / 2px 1px repeat-x; }
.tree label:first-child .twig { height: 7px; align-self: flex-end; background-position: 0 0; }
.tree label:last-child .twig { height: 6px; align-self: flex-start; background-position: 0 100%; }
.tree input { appearance: none; flex: none; width: 11px; height: 11px; border: 1px solid #888; background: #fff; margin-right: 3px; }
.tree input:checked::before { content: ""; display: block; width: 9px; height: 9px; background: #111; clip-path: polygon(10% 42%, 38% 60%, 90% 8%, 90% 38%, 38% 92%, 10% 68%); }
.actions { display: flex; justify-content: flex-end; gap: 10px; margin-top: 18px; padding-right: 1px; }
.actions button { width: 66px; height: 24px; background: #e1e1e1; border: 1px solid #b4b4b4; color: #222; }
.resize { height: 10px; border-top: 1px solid #e2e2e2; background: #f8f8f8; display: flex; justify-content: flex-end; align-items: flex-end; }
.resize svg { width: 8px; height: 8px; margin: 0 1px 1px 0; }

.mark { position: absolute; border: 3px solid #e53e3e; }
.mark-filter { left: 543px; top: 10px; width: 44px; height: 74px; }
.mark-cell { left: 230px; top: 151px; width: 74px; height: 33px; }
.mark-number { left: 60px; top: 286px; width: 235px; height: 22px; }
.mark-less { left: 298px; top: 379px; width: 137px; height: 27px; }

.drag { position: absolute; right: 16px; top: 155px; width: 56px; height: 23px; display: flex; overflow: hidden; border: 1px solid #3a9ad9; border-right: 0; border-radius: 3px 0 0 3px; background: linear-gradient(#d9effc, #9fd6f8); }
.drag-icon { flex: none; width: 27px; background: linear-gradient(#3fa9f0, #1788da); display: flex; align-items: center; justify-content: center; }
.drag-icon svg { width: 20px; height: 17px; }
.drag-text { padding-left: 11px; line-height: 23px; white-space: nowrap; color: #3c7fae; }
.drag-side { position: absolute; right: 0; top: 144px; width: 13px; height: 25px; overflow: hidden; border-radius: 3px 0 0 3px; background: linear-gradient(#3fa9f0, #1788da); padding: 4px 0 0 5px; }
.drag-side svg { width: 20px; height: 17px; }
.ball { position: absolute; right: 16px; top: 407px; width: 31px; height: 62px; color: #fff; }
.ball svg { width: 31px; height: 62px; }
.ball b { position: absolute; right: 0; top: 20px; font: 20px/24px "Noto Sans", sans-serif; }
.ime { position: absolute; right: 0; top: 493px; width: 145px; height: 24px; display: flex; align-items: center; gap: 6px; background: #fdfdff; border: 1px solid #c3cfdb; border-right: 0; padding-left: 16px; }
.ime svg { width: 16px; height: 16px; }
.ime .ime-logo { width: 28px; height: 28px; margin: -4px 0 0 -32px; }
.ime b { width: 16px; font-size: 15px; line-height: 20px; color: #2173bd; }
.viewer { position: absolute; left: 508px; bottom: 0; width: 240px; height: 29px; display: flex; background: #2e2e2e; overflow: hidden; }
.viewer button { width: 60px; height: 29px; }
.viewer .hot { background: #444; }
.viewer svg { width: 60px; height: 29px; }
</style>
